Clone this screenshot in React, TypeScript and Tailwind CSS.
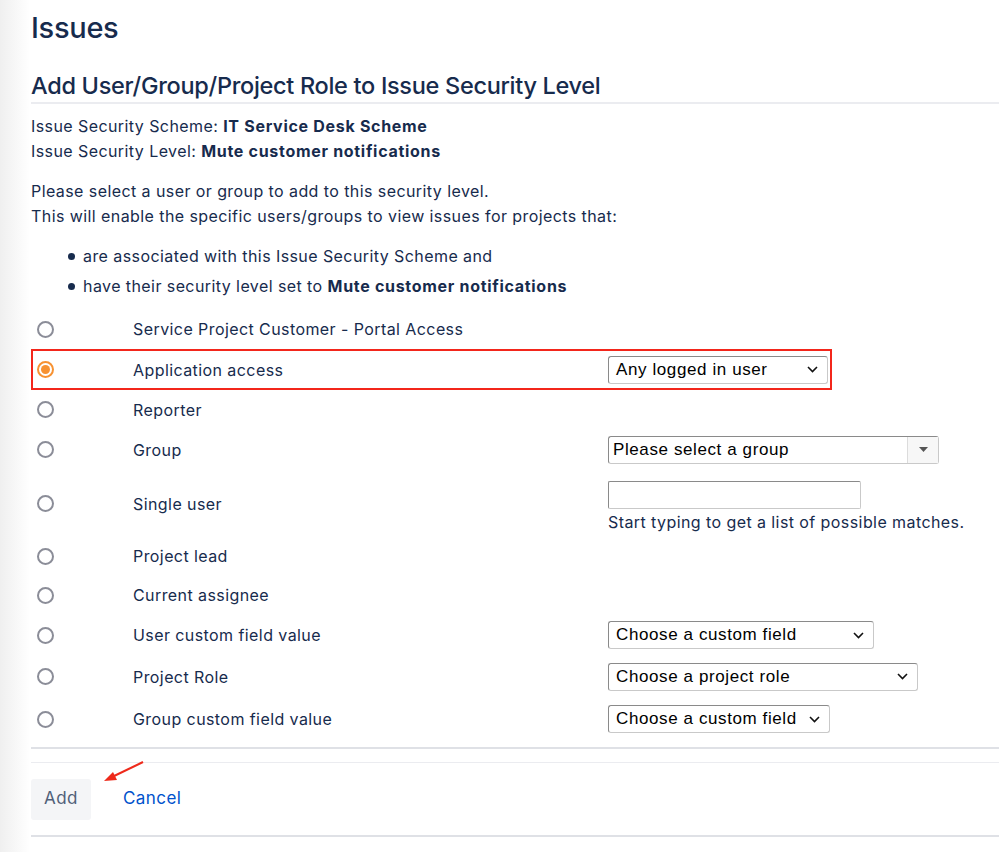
import React from "react";

function Radio({ checked }: { checked?: boolean }) {
  if (checked) {
    return (
      <span className="flex h-[17px] w-[17px] items-center justify-center rounded-full border-2 border-[#f79232] bg-white">
        <span className="h-[9px] w-[9px] rounded-full bg-[#f79232]" />
      </span>
    );
  }
  return <span className="block h-[17px] w-[17px] rounded-full border-2 border-[#8b8d98] bg-white" />;
}

function Chevron() {
  return (
    <svg width="11" height="7" viewBox="0 0 11 7" className="shrink-0">
      <path d="M1 1 L5.5 5.5 L10 1" fill="none" stroke="#111" strokeWidth="1.6" />
    </svg>
  );
}

function Select({ text, width }: { text: string; width: string }) {
  return (
    <div
      className={`flex h-[28px] items-center justify-between rounded-[3px] border border-[#c9c9c9] border-t-[#8a8a8a] border-l-[#8a8a8a] bg-white pl-[7px] pr-[9px] text-[17px] tracking-[0.6px] text-black ${width}`}
      style={{ fontFamily: "'Liberation Sans', Arial, sans-serif" }}
    >
      <span>{text}</span>
      <Chevron />
    </div>
  );
}

function Row({
  label,
  checked,
  control,
  className = "",
}: {
  label: string;
  checked?: boolean;
  control?: React.ReactNode;
  className?: string;
}) {
  return (
    <div className={`grid grid-cols-[102px_475px_1fr] items-center ${className}`}>
      <div className="pl-[6px]">
        <Radio checked={checked} />
      </div>
      <div>{label}</div>
      <div>{control}</div>
    </div>
  );
}

export default function App() {
  return (
    <div
      className="relative min-h-[852px] w-[999px] bg-white text-[16px] tracking-[0.42px] text-[#172b4d]"
      style={{ fontFamily: "Inter, 'Noto Sans', sans-serif" }}
    >
      <div className="absolute left-0 top-0 h-full w-[30px] bg-gradient-to-r from-[#efefef] to-white" />
      <div className="relative pl-[31px]">
        <h1 className="pt-[11px] text-[29px] font-medium leading-[34px] tracking-[-0.3px]">Issues</h1>
        <h2 className="mt-[26px] border-b-2 border-[#ebecf0] pb-[1px] text-[23.5px] font-medium leading-[30px] tracking-[-0.3px]">
          Add User/Group/Project Role to Issue Security Level
        </h2>
        <div className="mt-[10px] leading-[25px]">
          <div>
            Issue Security Scheme: <b className="font-bold tracking-[0.7px]">IT Service Desk Scheme</b>
          </div>
          <div>
            Issue Security Level: <b className="font-bold tracking-[0.7px]">Mute customer notifications</b>
          </div>
        </div>
        <div className="mt-[15px] leading-[25px]">
          <div>Please select a user or group to add to this security level.</div>
          <div>This will enable the specific users/groups to view issues for projects that:</div>
        </div>
        <ul className="mt-[12px] leading-[30px]">
          <li className="flex items-center">
            <span className="ml-[37px] mr-[8px] h-[7px] w-[7px] rounded-full bg-[#172b4d]" />
            are associated with this Issue Security Scheme and
          </li>
          <li className="flex items-center">
            <span className="ml-[37px] mr-[8px] h-[7px] w-[7px] rounded-full bg-[#172b4d]" />
            <span>
              have their security level set to <b className="font-bold tracking-[0.7px]">Mute customer notifications</b>
            </span>
          </li>
        </ul>
        <div className="mt-[8px]">
          <Row className="h-[40px]" label="Service Project Customer - Portal Access" />
          <div className="h-[41px] w-[801px] border-2 border-[#f3261b]">
            <Row
              className="-ml-[2px] -mt-[2px] h-[41px]"
              label="Application access"
              checked
              control={<Select text="Any logged in user" width="w-[220px]" />}
            />
          </div>
          <Row className="h-[39px]" label="Reporter" />
          <Row
            className="h-[41px]"
            label="Group"
            control={
              <div
                className="flex h-[28px] w-[331px] rounded-[3px] border border-[#c9c9c9] border-t-[#8a8a8a] border-l-[#8a8a8a] bg-white text-[17px] tracking-[0.6px] text-black"
                style={{ fontFamily: "'Liberation Sans', Arial, sans-serif" }}
              >
                <span className="flex flex-1 items-center pl-[4px]">Please select a group</span>
                <span className="flex w-[31px] items-center justify-center border-l border-[#dcdcdc] bg-[#f7f7f7]">
                  <svg width="9" height="5" viewBox="0 0 9 5">
                    <path d="M0 0 H9 L4.5 5 Z" fill="#555" />
                  </svg>
                </span>
              </div>
            }
          />
          <Row
            className="h-[67px]"
            label="Single user"
            control={
              <div className="pt-[6px]">
                <div className="h-[28px] w-[253px] rounded-[2px] border border-[#c9c9c9] border-t-[#8a8a8a] border-l-[#8a8a8a] bg-white" />
                <div className="mt-[3px] text-[16px] leading-[20px]">Start typing to get a list of possible matches.</div>
              </div>
            }
          />
          <Row className="h-[38px]" label="Project lead" />
          <Row className="h-[40px]" label="Current assignee" />
          <Row
            className="h-[40px]"
            label="User custom field value"
            control={<Select text="Choose a custom field" width="w-[266px]" />}
          />
          <Row
            className="h-[43px]"
            label="Project Role"
            control={<Select text="Choose a project role" width="w-[310px]" />}
          />
          <Row
            className="h-[42px]"
            label="Group custom field value"
            control={<Select text="Choose a custom field" width="w-[222px]" />}
          />
        </div>
        <div className="mt-[7px] h-[2px] bg-[#dfe1e6]" />
        <div className="mt-[13px] h-px bg-[#ebecf0]" />
        <div className="flex h-[72px] items-center gap-[32px]">
          <button className="h-[41px] w-[60px] rounded-[3px] bg-[#f4f5f7] text-[17px] text-[#505f79]">Add</button>
          <span className="text-[17px] text-[#0052cc]">Cancel</span>
        </div>
        <div className="h-[2px] bg-[#dfe1e6]" />
      </div>
      <svg className="absolute left-[100px] top-[758px]" width="48" height="28" viewBox="0 0 48 28">
        <line x1="43" y1="4" x2="12" y2="19" stroke="#ee2a1b" strokeWidth="2" />
        <path d="M4 23 L13 14 L17 22 Z" fill="#ee2a1b" />
      </svg>
    </div>
  );
}
